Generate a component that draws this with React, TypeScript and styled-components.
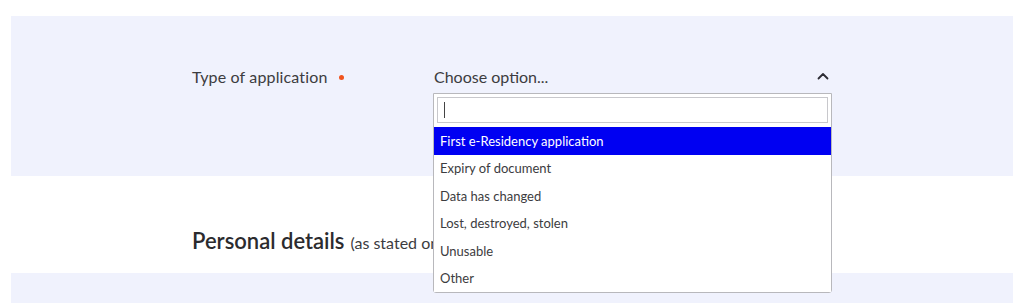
import React from "react";
import styled, { createGlobalStyle } from "styled-components";

const Global = createGlobalStyle`
  html, body { margin: 0; padding: 0; background: #ffffff; }
  body { font-family: "Lato", "Open Sans", sans-serif; color: #333; overflow: hidden; }
  * { box-sizing: border-box; }
`;

const Page = styled.div`
  padding: 16px 11px 0 11px;
  display: flex;
  flex-direction: column;
`;

const Panel = styled.section<{ $h: number }>`
  background: #f0f2fd;
  height: ${(p) => p.$h}px;
  padding: 43px 0 0 181px;
`;

const Row = styled.div`
  display: flex;
  align-items: flex-start;
`;

const Label = styled.div`
  width: 242px;
  height: 34px;
  display: flex;
  align-items: center;
  font-size: 16px;
  letter-spacing: 0.15px;
  color: #3c3c40;
`;

const Required = styled.span`
  display: inline-block;
  width: 5px;
  height: 5px;
  border-radius: 50%;
  background: #f0541e;
  margin-left: 11px;
  margin-top: 2px;
`;

const SelectWrap = styled.div`
  position: relative;
  width: 397px;
`;

const Trigger = styled.div`
  height: 34px;
  display: flex;
  align-items: center;
  justify-content: space-between;
  font-size: 16px;
  color: #3c3c40;
  padding-right: 2px;
`;

const Dropdown = styled.div`
  position: absolute;
  top: 34px;
  left: -1px;
  width: 399px;
  background: #fff;
  border: 1px solid #b8b8bc;
  border-radius: 0 0 3px 3px;
  padding: 3px 0 0 0;
  z-index: 10;
`;

const Search = styled.div`
  margin: 0 3px 4px 3px;
  height: 26px;
  border: 1px solid #c8c8cc;
  display: flex;
  align-items: center;
  padding-left: 6px;
`;

const Caret = styled.span`
  width: 1px;
  height: 16px;
  background: #444;
`;

const Option = styled.div<{ $active?: boolean }>`
  height: 27.5px;
  display: flex;
  align-items: center;
  padding-left: 6px;
  font-size: 13px;
  background: ${(p) => (p.$active ? "#0000f2" : "#fff")};
  color: ${(p) => (p.$active ? "#fff" : "#3c3c40")};
`;

const HeadingRow = styled.div`
  height: 97px;
  padding: 51px 0 0 181px;
  display: flex;
  align-items: baseline;
`;

const Heading = styled.h2`
  margin: 0;
  font-size: 22px;
  font-weight: 600;
  color: #2b2b2e;
`;

const Note = styled.span`
  font-size: 16px;
  color: #3c3c40;
  margin-left: 6px;
`;

const Chevron = () => (
  <svg width="12" height="8" viewBox="0 0 12 8" fill="none">
    <path d="M1.5 6.5 L6 2 L10.5 6.5" stroke="#2c2c34" strokeWidth="1.8" strokeLinecap="round" strokeLinejoin="round" />
  </svg>
);

const options = [
  "First e-Residency application",
  "Expiry of document",
  "Data has changed",
  "Lost, destroyed, stolen",
  "Unusable",
  "Other",
];

export default function App() {
  return (
    <>
      <Global />
      <Page>
        <Panel $h={160}>
          <Row>
            <Label>
              Type of application
              <Required />
            </Label>
            <SelectWrap>
              <Trigger>
                Choose option...
                <Chevron />
              </Trigger>
              <Dropdown>
                <Search>
                  <Caret />
                </Search>
                {options.map((o, i) => (
                  <Option key={o} $active={i === 0}>
                    {o}
                  </Option>
                ))}
              </Dropdown>
            </SelectWrap>
          </Row>
        </Panel>
        <HeadingRow>
          <Heading>Personal details</Heading>
          <Note>(as stated on your document)</Note>
        </HeadingRow>
        <Panel $h={30} />
      </Page>
    </>
  );
}
